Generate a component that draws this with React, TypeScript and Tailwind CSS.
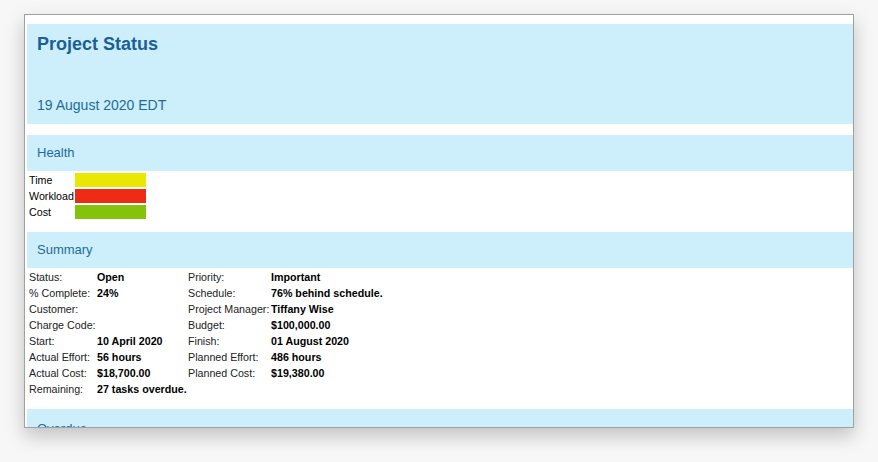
export default function App() {
  const rows: [string, string, string, string][] = [
    ["Status:", "Open", "Priority:", "Important"],
    ["% Complete:", "24%", "Schedule:", "76% behind schedule."],
    ["Customer:", "", "Project Manager:", "Tiffany Wise"],
    ["Charge Code:", "", "Budget:", "$100,000.00"],
    ["Start:", "10 April 2020", "Finish:", "01 August 2020"],
    ["Actual Effort:", "56 hours", "Planned Effort:", "486 hours"],
    ["Actual Cost:", "$18,700.00", "Planned Cost:", "$19,380.00"],
    ["Remaining:", "27 tasks overdue.", "", ""],
  ];
  const health: [string, string][] = [
    ["Time", "bg-[#e8e800]"],
    ["Workload", "bg-[#ee2b14]"],
    ["Cost", "bg-[#85c20a]"],
  ];
  return (
    <div className="w-[878px] h-[462px] bg-[#f7f7f7] pt-[14px] pl-[24px]" style={{ fontFamily: '"Liberation Sans", Arial, sans-serif' }}>
      <div className="w-[830px] h-[414px] bg-white border border-[#a0a0a0] shadow-[0_8px_18px_rgba(0,0,0,0.22)] overflow-hidden pt-[9px] pl-[2px]">
        <div className="bg-[#cdeefb] h-[100px] px-[10px] pt-[7px] flex flex-col justify-between pb-[8px]">
          <div className="text-[18px] font-bold text-[#1a5f97]">Project Status</div>
          <div className="text-[14px] text-[#1f6c99]">19 August 2020 EDT</div>
        </div>
        <div className="h-[11px]" />
        <div className="bg-[#cdeefb] h-[36px] px-[10px] flex items-center text-[13px] text-[#1f6c99]">Health</div>
        <div className="py-[1px] pl-[2px] text-[10.7px] text-black">
          {health.map(([l, c]) => (
            <div key={l} className="flex items-center h-[16px]">
              <span className="w-[46px] shrink-0 whitespace-nowrap">{l}</span>
              <span className={`w-[71px] h-[14px] ${c}`} />
            </div>
          ))}
        </div>
        <div className="h-[11px]" />
        <div className="bg-[#cdeefb] h-[36px] px-[10px] flex items-center text-[13px] text-[#1f6c99]">Summary</div>
        <div className="pt-[1px] pl-[2px] text-[10.7px] text-black">
          {rows.map((r, i) => (
            <div key={i} className="flex items-center h-[16px]">
              <span className="w-[68px] shrink-0 whitespace-nowrap text-[#222]">{r[0]}</span>
              <span className="w-[91px] shrink-0 font-bold whitespace-nowrap">{r[1]}</span>
              <span className="w-[83px] shrink-0 text-[#222] whitespace-nowrap">{r[2]}</span>
              <span className="font-bold whitespace-nowrap">{r[3]}</span>
            </div>
          ))}
        </div>
        <div className="h-[12px]" />
        <div className="bg-[#cdeefb] h-[36px] px-[10px] pt-[10px] text-[13px] text-[#1f6c99]">Overdue</div>
      </div>
    </div>
  );
}
